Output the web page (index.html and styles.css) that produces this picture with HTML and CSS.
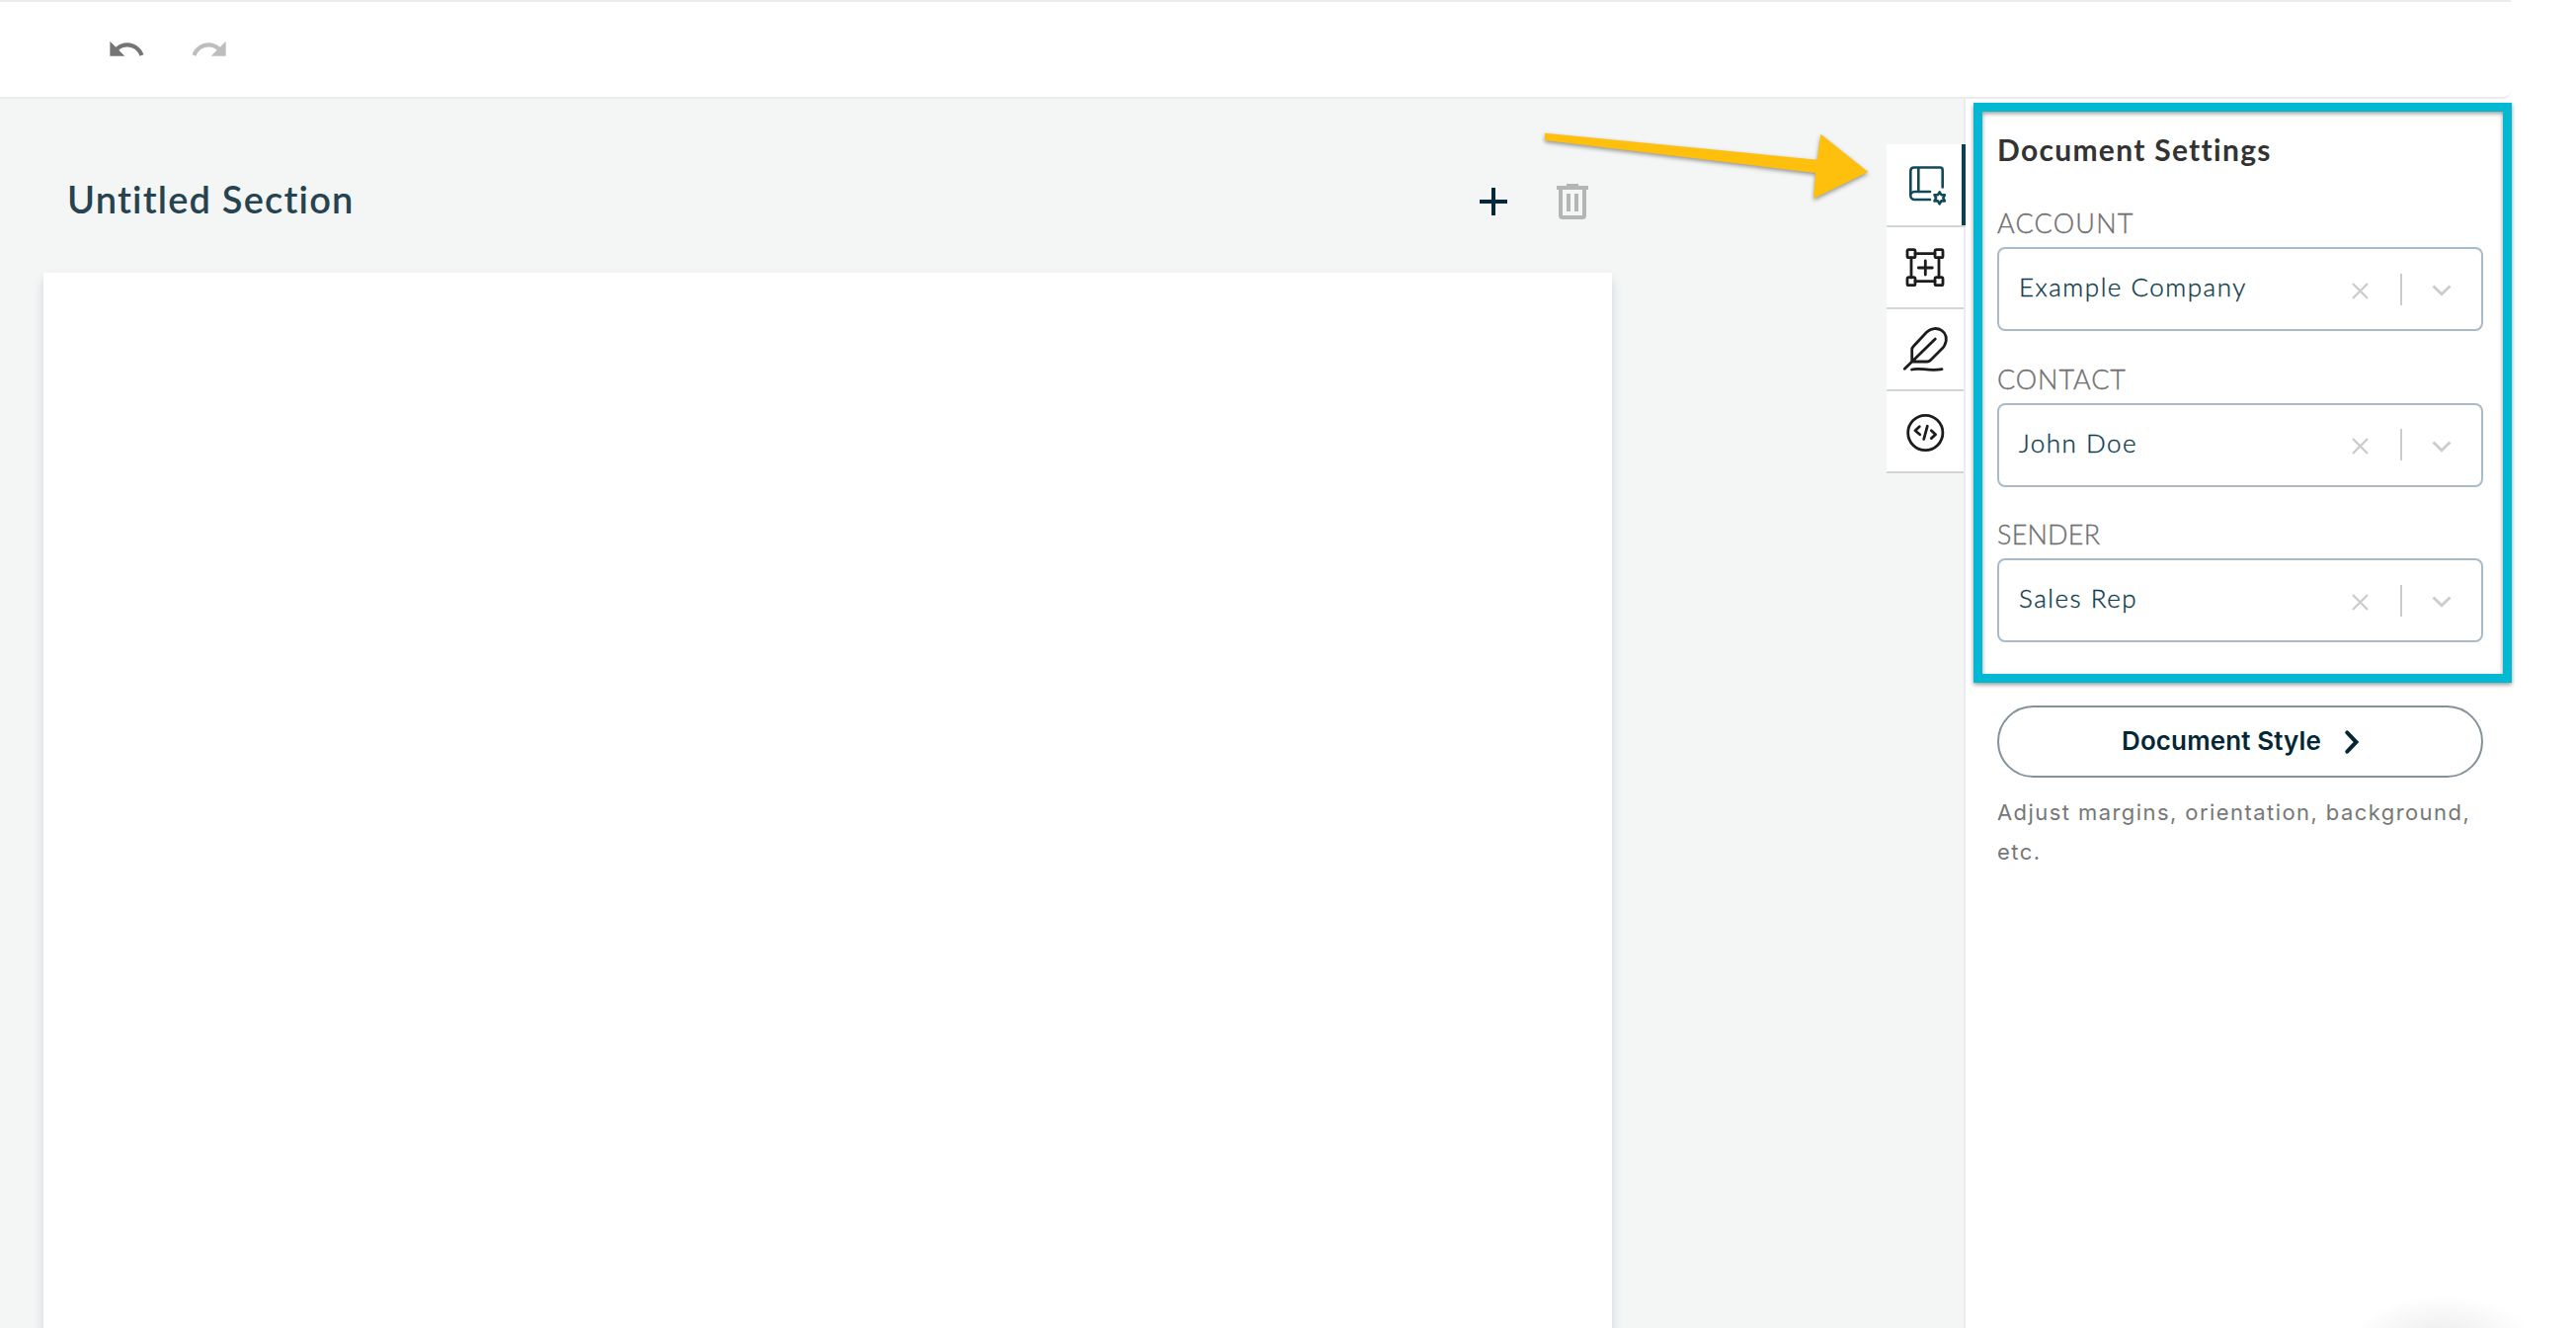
FILE: index.html
```html
<!DOCTYPE html>
<html lang="en">
<head>
<meta charset="utf-8">
<title>Document editor</title>
<link rel="stylesheet" href="styles.css">
</head>
<body>
<header class="toolbar">
  <svg class="tool undo" viewBox="0 0 24 24"><path d="M12.5 8c-2.65 0-5.05.99-6.9 2.6L2 7v9h9l-3.62-3.62c1.39-1.16 3.16-1.88 5.12-1.88 3.54 0 6.55 2.31 7.6 5.5l2.37-.78C21.08 11.03 17.15 8 12.5 8z"/></svg>
  <svg class="tool redo" viewBox="0 0 24 24"><path d="M18.4 10.6C16.55 8.99 14.15 8 11.5 8c-4.65 0-8.58 3.03-9.96 7.22L3.9 16c1.05-3.19 4.05-5.5 7.6-5.5 1.95 0 3.73.72 5.12 1.88L13 16h9V7l-3.6 3.6z"/></svg>
</header>
<div class="workspace">
  <main class="canvas">
    <div class="section-head">
      <h1 class="section-title">Untitled Section</h1>
      <svg class="add" viewBox="0 0 28 28"><path d="M14 0v28M0 14h28"/></svg>
      <svg class="trash" viewBox="0 0 32 36"><path class="trash-lid" d="M0 2h10V0h12v2h10v4H0z"/><path class="trash-can" d="M4 5v27q0 2 2 2h20q2 0 2-2V5M12 10v18M20 10v18"/></svg>
    </div>
    <div class="page"></div>
  </main>
  <nav class="tabs">
    <div class="tab tab-active">
      <svg class="tab-icon" viewBox="0 0 78 82"><path d="M56.7 43.5V26q0-2.500-2.500-2.500H28q-3.700 0-3.700 3.700V52M32.300 24v24M44 48H28.300a4 4 0 0 0 0 8H44"/><path class="gear" d="M53.700 48.300l1.700 2.900 3.500 0-1.600 3.100 1.600 3.100-3.500 0-1.700 2.900-1.700-2.900-3.500 0 1.600-3.100-1.600-3.100 3.500 0z"/></svg>
    </div>
    <div class="tab">
      <svg class="tab-icon" viewBox="0 0 78 82"><path d="M29 26.700h20M29 54.700h20M25 31v20M53 31v20M39.300 34v14M32.300 41h14"/><rect x="21" y="22.700" width="8" height="8" rx="1.500"/><rect x="49" y="22.700" width="8" height="8" rx="1.500"/><rect x="21" y="50.700" width="8" height="8" rx="1.500"/><rect x="49" y="50.700" width="8" height="8" rx="1.500"/></svg>
    </div>
    <div class="tab">
      <svg class="tab-icon" viewBox="0 0 78 82"><path d="M18.300 60.300L49.300 30M25.700 53V41q0-2 1.500-3.500L40.500 23.300C50 14 65.500 23 58.700 36.500Q58 38 57 39L44.500 51.500Q43 53 41 53zM25.500 61C34 58.500 41 63 56 60.700"/></svg>
    </div>
    <div class="tab">
      <svg class="tab-icon" viewBox="0 0 78 82"><circle cx="39.300" cy="42" r="17.600"/><path d="M33.300 35.800L29 39.800l4.700 4M41.300 35.300l-3.600 13.200M45.300 39.800l4.300 3.900-4.300 3.900"/></svg>
    </div>
  </nav>
  <aside class="panel">
    <h2 class="panel-title">Document Settings</h2>
    <div class="field">
      <div class="label account">ACCOUNT</div>
      <div class="select"><div class="value">Example Company</div><svg class="clear" viewBox="0 0 17 17"><path d="M1 1l15 15M16 1L1 16"/></svg><i class="bar"></i><svg class="caret" viewBox="0 0 20 12"><path d="M1.500 1.500L10 9.800l8.500-8.300"/></svg></div>
    </div>
    <div class="field">
      <div class="label">CONTACT</div>
      <div class="select"><div class="value">John Doe</div><svg class="clear" viewBox="0 0 17 17"><path d="M1 1l15 15M16 1L1 16"/></svg><i class="bar"></i><svg class="caret" viewBox="0 0 20 12"><path d="M1.500 1.500L10 9.800l8.500-8.300"/></svg></div>
    </div>
    <div class="field">
      <div class="label sender">SENDER</div>
      <div class="select"><div class="value">Sales Rep</div><svg class="clear" viewBox="0 0 17 17"><path d="M1 1l15 15M16 1L1 16"/></svg><i class="bar"></i><svg class="caret" viewBox="0 0 20 12"><path d="M1.500 1.500L10 9.800l8.500-8.300"/></svg></div>
    </div>
    <button class="style-button">Document Style<svg class="next" viewBox="0 0 14 24"><path d="M2.300 2.300L11.500 12l-9.200 9.700"/></svg></button>
    <p class="hint">Adjust margins, orientation, background,<br>etc.</p>
  </aside>
</div>
<div class="highlight"></div>
<svg class="arrow" viewBox="1550 120 360 100"><path d="M1564 134.700L1839.700 161.700 1843.300 135.700 1891.300 174 1836 201 1838 175 1564 142z"/></svg>
<div class="launcher-glow"></div>
</body>
</html>
```
FILE: styles.css
```css
* { box-sizing: border-box; }
body {
  margin: 0;
  width: 2608px;
  height: 1344px;
  overflow: hidden;
  background: #fff;
  font-family: Lato, "Open Sans", sans-serif;
  position: relative;
}
svg { display: block; fill: none; flex: none; overflow: visible; }
.toolbar {
  width: 2542px;
  height: 100px;
  padding: 28px 0 0 108px;
  display: flex;
  gap: 44px;
  border-top: 2px solid #e9ebee;
  border-bottom: 2px solid #e9ebee;
  border-bottom-right-radius: 8px;
}
.tool { width: 40px; height: 40px; }
.undo { fill: #757575; }
.redo { fill: #bdbdbd; }
.workspace { display: flex; height: 1244px; }
.canvas {
  width: 1910px;
  height: 1244px;
  overflow: hidden;
  padding-left: 44px;
  background: #f4f6f6;
}
.section-head {
  width: 1588px;
  height: 176px;
  padding: 32px 24px 0 24px;
  display: flex;
  align-items: center;
}
.section-title {
  margin: 0 0 6px;
  flex: 1;
  font-size: 38px;
  font-weight: 600;
  line-height: 46px;
  letter-spacing: 1.2px;
  color: #26434f;
}
.add { width: 28px; height: 28px; margin-right: 50px; stroke: #04283a; stroke-width: 4; }
.trash { width: 32px; height: 36px; }
.trash-lid { fill: #b5b5b5; }
.trash-can { stroke: #b5b5b5; stroke-width: 4; }
.page { width: 1588px; height: 1100px; background: #fff; box-shadow: 0 6px 10px rgba(40, 50, 90, .16); }
.tabs {
  width: 80px;
  padding-top: 46px;
  background: #f4f6f6;
  border-right: 2px solid #ebecef;
}
.tab {
  height: 83px;
  background: #fff;
  border-bottom: 2px solid #d3d4d5;
}
.tab-active { width: 80px; height: 84px; position: relative; }
.tab-active::after {
  content: "";
  position: absolute;
  right: 0;
  top: 0;
  width: 4px;
  height: 82px;
  background: #0b4050;
}
.tab-icon { width: 78px; height: 82px; stroke: #1c1c1c; stroke-width: 2.8; stroke-linecap: round; stroke-linejoin: round; }
.tab-active .tab-icon { stroke: #12495a; stroke-width: 2.6; }
.panel { width: 554px; padding: 32px 30px 0 32px; }
.panel-title {
  margin: 0 0 40px;
  font-size: 30px;
  font-weight: 700;
  line-height: 38px;
  letter-spacing: 1.3px;
  color: #333;
}
.field { height: 157.500px; }
.label {
  height: 40px;
  font-size: 27px;
  font-weight: 300;
  line-height: 32px;
  letter-spacing: .9px;
  color: #707070;
  -webkit-text-stroke: .35px #707070;
}
.account { letter-spacing: 1.2px; }
.sender { letter-spacing: .2px; }
.select {
  width: 492px;
  height: 85px;
  display: flex;
  align-items: center;
  padding: 0 30px 0 20px;
  border: 2px solid #a9bbc8;
  border-radius: 8px;
}
.value {
  flex: 1;
  padding-bottom: 5px;
  font-size: 26px;
  font-weight: 300;
  letter-spacing: 1.5px;
  color: #0c3a4a;
  -webkit-text-stroke: .35px #0c3a4a;
}
.clear { width: 17px; height: 17px; margin-top: 3px; stroke: #ccc; stroke-width: 2.400; }
.bar { width: 2px; height: 32px; margin: 0 30px 0 32px; background: #ccc; }
.caret { width: 20px; height: 12px; margin-top: 3px; stroke: #ccc; stroke-width: 2.800; }
.style-button {
  width: 492px;
  height: 73px;
  margin-top: 31.500px;
  padding: 0 0 2px;
  display: flex;
  align-items: center;
  justify-content: center;
  gap: 24px;
  background: #fff;
  border: 2px solid #84929a;
  border-radius: 37px;
  font: 600 26px Inter, sans-serif;
  letter-spacing: .12px;
  color: #052735;
}
.next { width: 14px; height: 24px; margin-top: 2px; stroke: #052735; stroke-width: 4; stroke-linecap: round; }
.hint { margin: 15px 0 0; font-family: Inter, sans-serif; font-size: 22px; line-height: 40px; letter-spacing: 1.43px; color: #777; white-space: nowrap; }
.highlight {
  position: absolute;
  left: 1998px;
  top: 104px;
  width: 545px;
  height: 587px;
  border: 9px solid #02b8d3;
  filter: drop-shadow(0 2px 2px rgba(0, 0, 0, .4));
}
.arrow {
  position: absolute;
  left: 1550px;
  top: 120px;
  width: 360px;
  height: 100px;
  fill: #ffbf0d;
  filter: drop-shadow(0 2px 2px rgba(0, 0, 0, .4));
}
.launcher-glow {
  position: absolute;
  left: 2383px;
  top: 1312px;
  width: 180px;
  height: 32px;
  background: radial-gradient(ellipse 90px 42px at 50% 42px, #ececec, #fff);
}
```
